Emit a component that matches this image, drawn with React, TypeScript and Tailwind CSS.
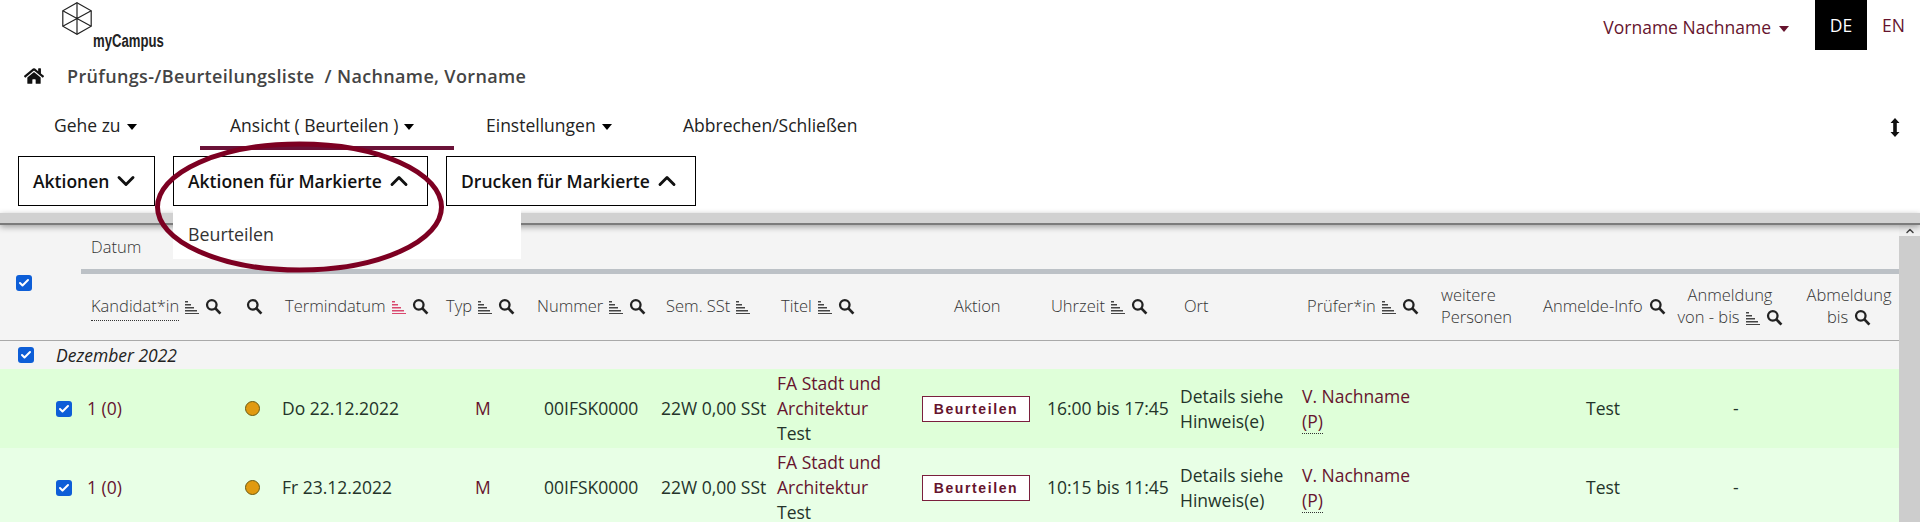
import React from 'react';
import { Check, ChevronDown, ChevronUp } from 'lucide-react';
import { FaHome } from 'react-icons/fa';

const gridCols =
  'grid grid-cols-[83px_155px_39px_163px_94px_123px_116px_145px_122px_136px_122px_134px_98px_140px_120px_109px]';

function CheckMark() {
  return (
    <span className="flex h-4 w-4 items-center justify-center rounded-[3px] bg-[#0d5ed7]">
      <Check className="h-3 w-3 text-white" strokeWidth={4} />
    </span>
  );
}

function SortIcon({ active = false }: { active?: boolean }) {
  return (
    <svg viewBox="0 0 14 13" className="ml-[6px] inline-block h-[13px] w-[14px] shrink-0 align-[-2px]" fill={active ? '#d9486e' : '#444'}>
      <rect x="0" y="0" width="3" height="1.5" />
      <rect x="0" y="3" width="6" height="1.5" />
      <rect x="0" y="6" width="9" height="1.5" />
      <rect x="0" y="9" width="12" height="1.5" />
      <rect x="0" y="12" width="14" height="1" />
    </svg>
  );
}

function SearchIcon({ className = 'ml-[6px]' }: { className?: string }) {
  return (
    <svg viewBox="0 0 15 15" className={`${className} inline-block h-[17px] w-[17px] shrink-0 align-[-3px]`} fill="none" stroke="#222">
      <circle cx="6" cy="6" r="4.2" strokeWidth="2" />
      <path d="M9.2 9.2 L13.6 13.8" strokeWidth="2.4" />
    </svg>
  );
}

function Caret({ className = 'text-black' }: { className?: string }) {
  return <span className={`ml-[6px] inline-block h-0 w-0 border-x-[5px] border-t-[6px] border-x-transparent border-t-current align-[2px] ${className}`} />;
}

function Logo() {
  return (
    <div className="flex items-start pl-[62px] pt-[2px]">
      <svg viewBox="0 0 30 33" className="h-[33px] w-[30px]" fill="none" stroke="#222" strokeWidth="1.2">
        <path d="M15 .7 L29.2 8.8 V24.2 L15 32.3 L.8 24.2 V8.8 Z" />
        <path d="M15 .7 V32.3 M.8 8.8 L29.2 24.2 M29.2 8.8 L.8 24.2" />
      </svg>
      <span className="ml-px mt-[29px] origin-left scale-x-[0.73] font-['Liberation_Sans',sans-serif] text-[18px] leading-[20px] font-bold text-[#222]">
        myCampus
      </span>
    </div>
  );
}

function ActionButton({ label, open, width }: { label: string; open: boolean; width: string }) {
  const Icon = open ? ChevronUp : ChevronDown;
  return (
    <button className={`flex h-[50px] ${width} items-center border border-black bg-white pl-[14px] text-[17.5px] font-semibold text-[#111]`}>
      {label}
      <Icon className="ml-[3px] h-7 w-7" strokeWidth={2.5} />
    </button>
  );
}

const rows = [
  { date: 'Do 22.12.2022', time: '16:00 bis 17:45', bg: 'bg-[#dfffd9]' },
  { date: 'Fr 23.12.2022', time: '10:15 bis 11:45', bg: 'bg-[#e8ffe6]' },
];

export default function App() {
  return (
    <div className="relative flex h-[522px] flex-col overflow-hidden bg-white font-['Open_Sans',sans-serif] text-[17.5px] text-[#24342a]">
      {/* Top bar */}
      <div className="flex h-[50px] justify-between">
        <Logo />
        <div className="flex items-start">
          <span className="mt-[15px] leading-[24px] text-[#66142e]">
            Vorname Nachname
            <span className="pl-[2px]">
              <Caret className="text-[#66142e]" />
            </span>
          </span>
          <span className="ml-[26px] flex h-[50px] w-[52px] items-center justify-center bg-black text-white">DE</span>
          <span className="flex h-[50px] w-[53px] items-center justify-center text-[#66142e]">EN</span>
        </div>
      </div>

      {/* Breadcrumb */}
      <div className="flex h-[52px] items-center pl-[24px]">
        <FaHome className="h-[18px] w-[20px] text-[#111]" />
        <span className="ml-[23px] text-[18px] font-semibold tracking-[0.35px] text-[#444]">
          Prüfungs-/Beurteilungsliste&nbsp; / Nachname, Vorname
        </span>
      </div>

      {/* Menu */}
      <div className="flex h-[48px] items-start justify-between pr-[20px]">
        <div className="flex text-[#222]">
          <span className="ml-[54px] mt-[11px] w-[146px] leading-[24px]">
            Gehe zu
            <Caret />
          </span>
          <span className="h-[48px] w-[254px] border-b-4 border-[#6b1238] pl-[30px] pt-[11px] leading-[24px]">
            Ansicht ( Beurteilen )
            <Caret />
          </span>
          <span className="ml-[32px] mt-[11px] w-[197px] leading-[24px]">
            Einstellungen
            <Caret />
          </span>
          <span className="mt-[11px] leading-[24px]">Abbrechen/Schließen</span>
        </div>
        <svg viewBox="0 0 10 19" className="mt-[16px] h-[19px] w-[10px]" fill="#111">
          <path d="M5 0 L9.5 5 H6.8 V14 H9.5 L5 19 L.5 14 H3.2 V5 H.5 Z" />
        </svg>
      </div>

      {/* Buttons */}
      <div className="mt-[6px] flex pl-[18px]">
        <ActionButton label="Aktionen" open={false} width="w-[137px]" />
        <ActionButton label="Aktionen für Markierte" open width="ml-[18px] w-[255px]" />
        <ActionButton label="Drucken für Markierte" open width="ml-[18px] w-[250px]" />
      </div>

      {/* Separator band */}
      <div className="relative z-10 mt-[7px] h-[12px] shrink-0 border-b-2 border-[#7b7b7b] bg-[#d1d1d1] shadow-[0_2px_6px_rgba(0,0,0,0.35)]" />

      {/* Table + scrollbar */}
      <div className="flex min-h-0 flex-1">
        <div className="min-w-0 flex-1 bg-[#f4f4f4]">
          <div className="flex h-[44px] items-center pl-[91px] pt-px text-[16.5px] font-light text-[#333]">Datum</div>
          <div className="ml-[81px] h-[5px] bg-[#bcc1c6]" />

          {/* Column headers */}
          <div className={`${gridCols} h-[67px] items-center border-b border-[#a9a9a9] pb-[2px] text-[16.5px] leading-[22px] font-light text-[#333]`}>
            <div className="self-start pl-[16px] pt-px">
              <CheckMark />
            </div>
            <div className="whitespace-nowrap pl-2">
              <span className="border-b border-dotted border-[#333] pb-[3px]">Kandidat*in</span>
              <SortIcon />
              <SearchIcon />
            </div>
            <div className="pl-[8px]">
              <SearchIcon className="" />
            </div>
            <div className="whitespace-nowrap pl-2">
              Termindatum
              <SortIcon active />
              <SearchIcon />
            </div>
            <div className="whitespace-nowrap pl-[6px]">
              Typ
              <SortIcon />
              <SearchIcon />
            </div>
            <div className="whitespace-nowrap pl-[3px]">
              Nummer
              <SortIcon />
              <SearchIcon />
            </div>
            <div className="whitespace-nowrap pl-[9px]">
              Sem. SSt
              <SortIcon />
            </div>
            <div className="whitespace-nowrap pl-2">
              Titel
              <SortIcon />
              <SearchIcon />
            </div>
            <div className="pl-[36px]">Aktion</div>
            <div className="whitespace-nowrap pl-[11px]">
              Uhrzeit
              <SortIcon />
              <SearchIcon />
            </div>
            <div className="pl-2">Ort</div>
            <div className="whitespace-nowrap pl-[9px]">
              Prüfer*in
              <SortIcon />
              <SearchIcon />
            </div>
            <div className="pl-[9px]">
              weitere
              <br />
              Personen
            </div>
            <div className="whitespace-nowrap pl-[13px]">
              Anmelde-Info
              <SearchIcon />
            </div>
            <div className="whitespace-nowrap text-center">
              Anmeldung
              <br />
              von - bis
              <SortIcon />
              <SearchIcon />
            </div>
            <div className="whitespace-nowrap pl-[9px] text-center">
              Abmeldung
              <br />
              bis
              <SearchIcon />
            </div>
          </div>

          {/* Group row */}
          <div className="flex h-[28px] items-center pl-[18px]">
            <CheckMark />
            <em className="ml-[22px] text-[#222]">Dezember 2022</em>
          </div>

          {/* Data rows */}
          {rows.map((row) => (
            <div key={row.date} className={`${gridCols} h-[79px] items-center leading-[25px] ${row.bg}`}>
              <div className="pl-[56px]">
                <CheckMark />
              </div>
              <div className="pl-1 text-[#66142e]">1 (0)</div>
              <div className="pl-[7px]">
                <span className="block h-[15px] w-[15px] rounded-full border border-[#6b5a10] bg-[#e09a10]" />
              </div>
              <div className="pl-[5px]">{row.date}</div>
              <div className="pl-[35px] text-[#66142e]">M</div>
              <div className="pl-[10px]">00IFSK0000</div>
              <div className="whitespace-nowrap pl-1">22W 0,00 SSt</div>
              <div className="pl-1">
                <span className="text-[#66142e]">
                  FA Stadt und
                  <br />
                  Architektur
                </span>
                <br />
                Test
              </div>
              <div className="pl-1">
                <button className="h-[26px] w-[108px] border border-[#7a1f3d] bg-white font-['Liberation_Sans',sans-serif] text-[14px] font-bold tracking-[1.6px] text-[#66142e]">
                  Beurteilen
                </button>
              </div>
              <div className="whitespace-nowrap pl-[7px]">{row.time}</div>
              <div className="whitespace-nowrap pl-1">
                Details siehe
                <br />
                Hinweis(e)
              </div>
              <div className="whitespace-nowrap pl-1 text-[#66142e]">
                V. Nachname
                <br />
                <span className="border-b border-dotted border-[#333]">(P)</span>
              </div>
              <div />
              <div className="pl-[56px]">Test</div>
              <div className="pl-[63px]">-</div>
              <div />
            </div>
          ))}
        </div>

        {/* Scrollbar */}
        <div className="flex w-[21px] shrink-0 flex-col">
          <div className="flex h-[11px] items-center justify-center bg-[#f1f1f1]">
            <ChevronUp className="h-3 w-3 text-[#444]" strokeWidth={3} />
          </div>
          <div className="flex-1 bg-[#cdcdcd]" />
        </div>
      </div>

      {/* Open dropdown of "Aktionen für Markierte" */}
      <div className="absolute left-[173px] top-[206px] z-20 flex h-[53px] w-[348px] items-center bg-white pl-[15px] pt-[3px] text-[17.8px] text-[#333]">
        Beurteilen
      </div>

      {/* Hand-drawn annotation ring */}
      <svg className="pointer-events-none absolute left-[150px] top-[138px] z-30 h-[136px] w-[300px]" viewBox="0 0 300 136" fill="none">
        <ellipse cx="149.5" cy="69" rx="142" ry="63" stroke="#7d0022" strokeWidth="5" />
      </svg>
    </div>
  );
}
